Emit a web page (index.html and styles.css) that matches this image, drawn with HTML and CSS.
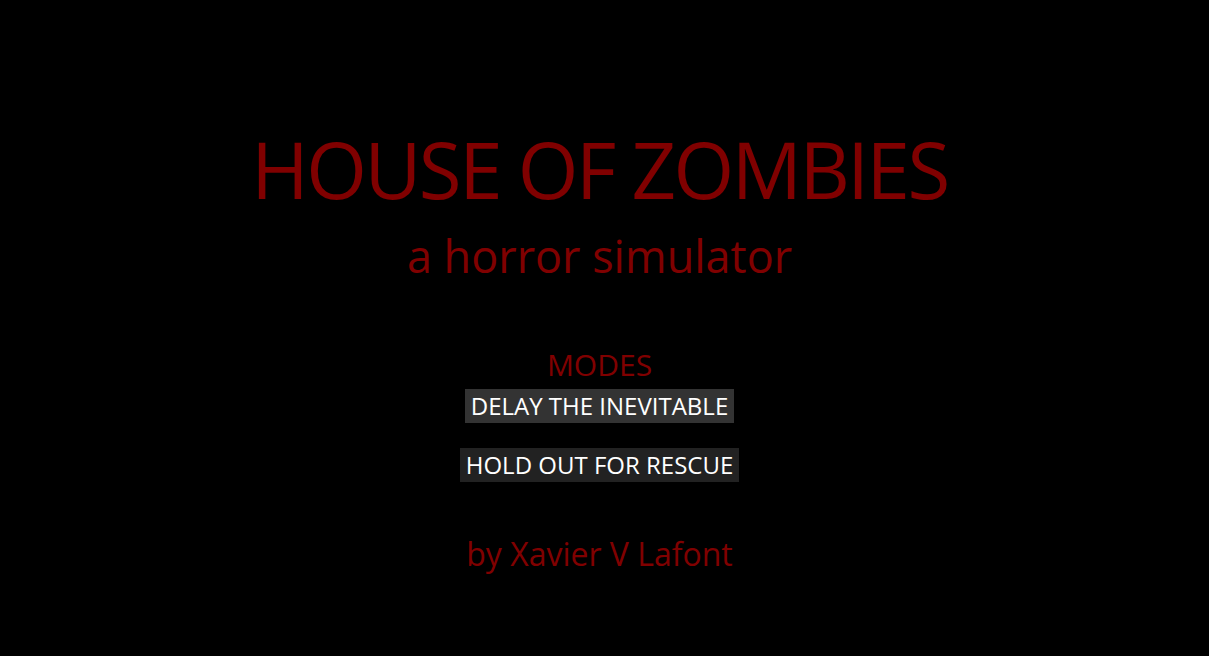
FILE: index.html
```html
<!DOCTYPE html>
<html lang="en">
<head>
    <meta charset="UTF-8">
    <meta name="viewport" content="width=device-width, initial-scale=1.0">
    <title>House of Zombies</title>
    <link rel="stylesheet" href="styles.css">
</head>
<body>
    <div class="container">
        <h1 class="title">HOUSE OF ZOMBIES</h1>
        <h2 class="subtitle">a horror simulator</h2>

        <div class="modes">
            <h3 class="modes-label">MODES</h3>
            <button class="mode-btn active">DELAY THE INEVITABLE</button>
            <button class="mode-btn">HOLD OUT FOR RESCUE</button>
        </div>

        <p class="credit">by Xavier V Lafont</p>
    </div>
</body>
</html>
```

FILE: styles.css
```css
* {
    margin: 0;
    padding: 0;
    box-sizing: border-box;
    font-family: 'Open Sans', 'DejaVu Sans', sans-serif;
}

body {
    background: #000;
    min-height: 100vh;
}

.container {
    display: flex;
    flex-direction: column;
    align-items: center;
    padding: 125px 10px 0 0;
    color: #800000;
}

.title {
    font-size: 78px;
    font-weight: normal;
    line-height: 88px;
    letter-spacing: -2.5px;
}

.subtitle {
    font-size: 45px;
    font-weight: normal;
    line-height: 56px;
    margin-top: 15px;
}

.modes {
    display: flex;
    flex-direction: column;
    align-items: center;
    gap: 25px;
    margin-top: 63px;
}

.modes-label {
    font-size: 30px;
    font-weight: normal;
    line-height: 36px;
    margin-bottom: -19px;
}

.mode-btn {
    background: #222;
    color: #fff;
    border: none;
    font-size: 24px;
    line-height: 34px;
    padding: 0 6px;
    cursor: pointer;
}

.mode-btn.active,
.mode-btn:hover {
    background: #333;
}

.credit {
    font-size: 32px;
    margin-top: 50px;
}
```
